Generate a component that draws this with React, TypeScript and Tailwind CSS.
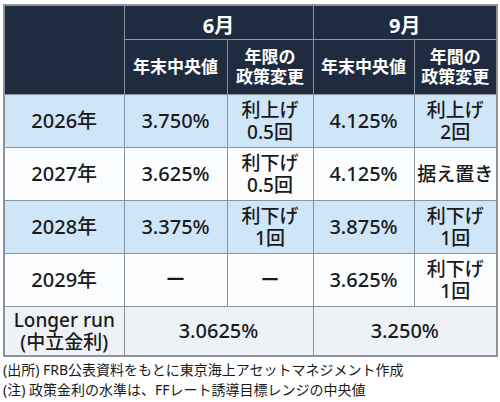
const rows = [
  { year: "2026年", junMid: "3.750%", junChg: ["利上げ", "0.5回"], sepMid: "4.125%", sepChg: ["利上げ", "2回"], tone: "blue" },
  { year: "2027年", junMid: "3.625%", junChg: ["利下げ", "0.5回"], sepMid: "4.125%", sepChg: ["据え置き"], tone: "white" },
  { year: "2028年", junMid: "3.375%", junChg: ["利下げ", "1回"], sepMid: "3.875%", sepChg: ["利下げ", "1回"], tone: "blue" },
  { year: "2029年", junMid: "ー", junChg: ["ー"], sepMid: "3.625%", sepChg: ["利下げ", "1回"], tone: "white" },
];

const cell = "border border-[#8b949d] text-center align-middle p-0";

function Lines({ lines }: { lines: string[] }) {
  return (
    <div className="text-[19px] leading-[22px]">
      {lines.map((l, i) => (
        <div key={i}>{l}</div>
      ))}
    </div>
  );
}

export default function App() {
  return (
    <div
      className="w-[500px] h-[402px] bg-white pt-[4px] pl-[3px] text-[#1a1a1a]"
      style={{ fontFamily: '"Noto Sans", "Noto Sans CJK JP", sans-serif' }}
    >
      <table className="w-[493px] border-collapse border-2 border-[#8b949d] table-fixed">
        <colgroup>
          <col className="w-[120px]" />
          <col className="w-[103px]" />
          <col className="w-[86px]" />
          <col className="w-[101px]" />
          <col className="w-[83px]" />
        </colgroup>
        <thead className="bg-[#1f2c40] text-white font-bold">
          <tr className="h-[34px]">
            <th rowSpan={2} className={`${cell} border-[#1f2c40]`} />
            <th colSpan={2} className="border border-[#8b949d] text-center align-bottom text-[20px] leading-[24px]">
              <div className="pb-[1px]">6月</div>
            </th>
            <th colSpan={2} className="border border-[#8b949d] text-center align-bottom text-[20px] leading-[24px]">
              <div className="pb-[1px]">9月</div>
            </th>
          </tr>
          <tr className="h-[55px]">
            <th className={`${cell} text-[17px] leading-[22px]`}>年末中央値</th>
            <th className={`${cell} text-[17px] leading-[20px]`}>
              年限の
              <br />
              政策変更
            </th>
            <th className={`${cell} text-[17px] leading-[22px]`}>年末中央値</th>
            <th className={`${cell} text-[17px] leading-[20px]`}>
              年間の
              <br />
              政策変更
            </th>
          </tr>
        </thead>
        <tbody className="font-medium">
          {rows.map((r) => (
            <tr key={r.year} className={`h-[53px] ${r.tone === "blue" ? "bg-[#cfe5f8]" : "bg-[#fbfdff]"}`}>
              <td className={`${cell} text-[20px]`}>{r.year}</td>
              <td className={`${cell} text-[20px]`}>{r.junMid}</td>
              <td className={cell}>
                <Lines lines={r.junChg} />
              </td>
              <td className={`${cell} text-[20px]`}>{r.sepMid}</td>
              <td className={cell}>
                <Lines lines={r.sepChg} />
              </td>
            </tr>
          ))}
          <tr className="h-[50px] bg-[#eef2f6]">
            <td className={`${cell} text-[19px] leading-[22px]`}>
              Longer run
              <br />
              (中立金利)
            </td>
            <td colSpan={2} className={`${cell} text-[20px]`}>3.0625%</td>
            <td colSpan={2} className={`${cell} text-[20px]`}>3.250%</td>
          </tr>
        </tbody>
      </table>
      <div className="mt-[3px] text-[14px] leading-[20px]">
        <div>(出所) FRB公表資料をもとに東京海上アセットマネジメント作成</div>
        <div>(注) 政策金利の水準は、FFレート誘導目標レンジの中央値</div>
      </div>
    </div>
  );
}
